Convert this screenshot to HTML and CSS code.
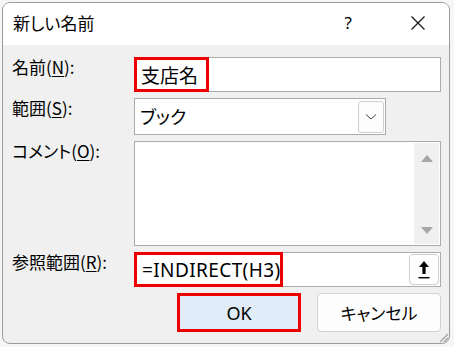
FILE: index.html
```html
<!DOCTYPE html>
<html lang="ja">
<head>
<meta charset="utf-8">
<title>新しい名前</title>
<link rel="stylesheet" href="styles.css">
</head>
<body>
<div class="window">
  <div class="titlebar">
    <span class="title">新しい名前</span>
    <span class="help">?</span>
    <svg class="close" width="16" height="16" viewBox="0 0 16 16"><path d="M1.5 1.5 L14.5 14.5 M14.5 1.5 L1.5 14.5" stroke="#1a1a1a" stroke-width="1.3" fill="none"/></svg>
  </div>
  <div class="content">
    <div class="form">
      <div class="label">名前(<u>N</u>):</div>
      <div class="field"><span class="hl name-hl">支店名</span></div>

      <div class="label">範囲(<u>S</u>):</div>
      <div class="combo-row">
        <div class="field combo">
          <span class="val">ブック</span>
          <span class="drop"><svg width="12" height="8" viewBox="0 0 12 8"><path d="M1 1.5 L6 6 L11 1.5" stroke="#444" stroke-width="1" fill="none"/></svg></span>
        </div>
      </div>

      <div class="label kana">コメント(<u>O</u>):</div>
      <div class="field memo">
        <div class="memo-text"></div>
        <div class="scroll">
          <svg width="14" height="8" viewBox="0 0 14 8"><path d="M1 8 L7 1 L13 8 Z" fill="#a6a6a6"/></svg>
          <svg width="14" height="8" viewBox="0 0 14 8"><path d="M1 0 L7 7 L13 0 Z" fill="#a6a6a6"/></svg>
        </div>
      </div>

      <div class="label">参照範囲(<u>R</u>):</div>
      <div class="field ref">
        <span class="hl ref-hl">=INDIRECT(H3)<span class="caret"></span></span>
        <span class="refbtn"><svg width="12" height="20" viewBox="0 0 12 20"><path d="M6 1 L11 7 L7.6 7 L7.6 14 L4.4 14 L4.4 7 L1 7 Z" fill="#000"/><rect x="0.5" y="17" width="11" height="1.4" fill="#000"/></svg></span>
      </div>
    </div>
    <div class="buttons">
      <div class="btn ok">OK</div>
      <div class="btn cancel">キャンセル</div>
    </div>
  </div>
  <svg class="grip" width="12" height="12" viewBox="0 0 12 12"><path d="M11 3 L3 11 M11 7 L7 11" stroke="#a0a0a0" stroke-width="1.2"/></svg>
</div>
</body>
</html>
```

FILE: styles.css
```css
html, body {
  margin: 0;
  padding: 0;
}
body {
  width: 454px;
  height: 347px;
  background: #f6f6f6;
  font-family: "Noto Sans", "Noto Sans CJK JP", sans-serif;
  color: #000;
  overflow: hidden;
}
.window {
  position: relative;
  margin: 2px 0 0 2px;
  width: 448px;
  height: 342px;
  box-sizing: border-box;
  border: 1px solid #9c9c9c;
  border-radius: 8px;
  background: #f0f0f0;
  overflow: hidden;
  display: flex;
  flex-direction: column;
}
.titlebar {
  height: 42px;
  flex: none;
  background: #fff;
  display: flex;
  align-items: center;
  padding-left: 10px;
}
.title {
  font-family: "Noto Sans CJK JP", sans-serif;
  font-size: 17px;
  font-feature-settings: "palt";
  flex: 1;
  margin-top: -3px;
}
.help {
  font-family: "Noto Sans", sans-serif;
  font-size: 17px;
  margin-right: 58px;
  margin-top: -3px;
}
.close {
  margin-right: 23px;
  margin-top: -3px;
}
.content {
  flex: 1;
  padding: 12px 8px 0 9px;
  display: flex;
  flex-direction: column;
}
.form {
  display: grid;
  grid-template-columns: 122px 1fr;
  grid-template-rows: 35px 37px 105px 35px;
  row-gap: 6px;
}
.label {
  font-family: "Noto Sans CJK JP", sans-serif;
  font-size: 17px;
  line-height: 20px;
  white-space: nowrap;
}
.label.kana {
  font-feature-settings: "palt";
}
.label u {
  text-decoration-thickness: 1px;
  text-underline-offset: 2px;
}
.field {
  box-sizing: border-box;
  border: 1px solid #ababab;
  background: #fff;
  display: flex;
  align-items: stretch;
  font-size: 18px;
}
.hl {
  box-sizing: border-box;
  border: 3px solid #ee0000;
  margin: -1px;
  display: flex;
  align-items: center;
}
.name-hl {
  font-family: "Noto Sans CJK JP", sans-serif;
  width: 75px;
  padding-left: 4px;
  font-size: 19px;
}
.combo-row {
  display: flex;
}
.combo {
  width: 252px;
  align-items: center;
  justify-content: space-between;
  padding: 1px;
}
.combo .val {
  font-family: "Noto Sans CJK JP", sans-serif;
  font-size: 18px;
  font-feature-settings: "palt";
  padding-left: 4px;
  margin-top: -2px;
}
.drop {
  width: 26px;
  height: 32px;
  box-sizing: border-box;
  border: 1px solid #cfcfcf;
  border-radius: 3px;
  background: #fdfdfd;
  display: flex;
  align-items: center;
  justify-content: center;
}
.memo {
  justify-content: space-between;
}
.memo-text {
  flex: 1;
}
.scroll {
  width: 25px;
  margin: 1px 1px 1px 0;
  background: #f0f0f0;
  display: flex;
  flex-direction: column;
  justify-content: space-between;
  align-items: center;
  padding: 11px 0 9px;
}
.ref {
  justify-content: space-between;
  align-items: center;
}
.ref-hl {
  align-self: stretch;
  width: 149px;
  padding-left: 5px;
  font-family: "Noto Sans", sans-serif;
  font-size: 19px;
  letter-spacing: 0.4px;
}
.caret {
  display: inline-block;
  width: 1px;
  height: 22px;
  background: #000;
  margin-left: 1px;
}
.refbtn {
  width: 30px;
  height: 31px;
  box-sizing: border-box;
  margin-right: 1px;
  border: 1px solid #cfcfcf;
  border-radius: 4px;
  background: #fff;
  display: flex;
  align-items: center;
  justify-content: center;
}
.buttons {
  display: flex;
  justify-content: flex-end;
  gap: 16px;
  margin-top: 6px;
}
.btn {
  width: 124px;
  height: 39px;
  box-sizing: border-box;
  display: flex;
  align-items: center;
  justify-content: center;
  font-size: 18px;
  font-family: "Noto Sans", "Noto Sans CJK JP", sans-serif;
}
.ok {
  border: 3px solid #ee0000;
  background: #e0ecf8;
}
.cancel {
  border: 1px solid #d2d2d2;
  border-radius: 4px;
  background: #fdfdfd;
  font-family: "Noto Sans CJK JP", sans-serif;
  font-size: 17px;
  font-feature-settings: "palt";
}
.grip {
  position: absolute;
  right: 0;
  bottom: 0;
}
```
